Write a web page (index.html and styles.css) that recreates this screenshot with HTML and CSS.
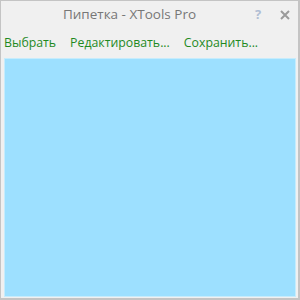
FILE: index.html
```html
<!DOCTYPE html>
<html lang="ru">
<head>
    <meta charset="UTF-8">
    <title>Пипетка - XTools Pro</title>
    <link rel="stylesheet" href="styles.css">
</head>
<body>

<div class="window">
    <div class="title-bar">
        <span class="title">Пипетка - XTools Pro</span>
        <span class="help-btn">?</span>
        <span class="close-btn">
            <svg width="10" height="10" viewBox="0 0 10 10">
                <path d="M1 1 L9 9 M9 1 L1 9" stroke="#9a9a9a" stroke-width="2"/>
            </svg>
        </span>
    </div>

    <div class="menu">
        <span class="menu-item">Выбрать</span>
        <span class="menu-item">Редактировать...</span>
        <span class="menu-item">Сохранить...</span>
    </div>

    <div class="color-box"></div>
</div>

</body>
</html>
```

FILE: styles.css
```css
body {
    margin: 0;
    font-family: "Open Sans", "Noto Sans", sans-serif;
}
.window {
    width: 300px;
    height: 300px;
    box-sizing: border-box;
    background-color: #f0f0f0;
    border: 1px solid #c4c4c4;
    border-right-width: 2px;
    border-bottom-width: 2px;
    display: flex;
    flex-direction: column;
}
.title-bar {
    height: 29px;
    position: relative;
}
.title {
    position: absolute;
    left: 0;
    right: 40px;
    top: 4px;
    text-align: center;
    font-size: 13.5px;
    line-height: 18px;
    color: #777;
}
.help-btn {
    position: absolute;
    left: 254px;
    top: 4px;
    font-size: 13px;
    line-height: 18px;
    font-weight: bold;
    color: #b0bed4;
}
.close-btn {
    position: absolute;
    left: 279px;
    top: 9px;
}
.close-btn svg {
    display: block;
}
.menu {
    display: flex;
    gap: 14px;
    padding: 4px 0 0 3px;
    height: 24px;
}
.menu-item {
    font-size: 12.3px;
    line-height: 18px;
    color: #1f8a1f;
}
.color-box {
    margin: 0 2px 1px 3px;
    flex: 1;
    background-color: #9de0ff;
    border: 1px solid #c6ecfc;
}
```
